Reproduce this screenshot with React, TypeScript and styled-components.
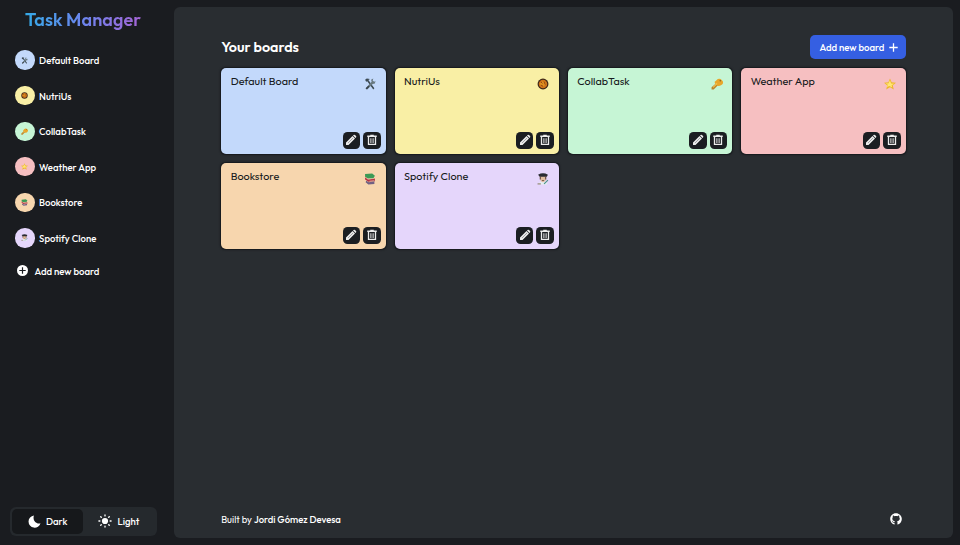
import React from "react";
import styled, { createGlobalStyle } from "styled-components";
import { FaGithub } from "react-icons/fa";

const GlobalStyle = createGlobalStyle`
  *, *::before, *::after { box-sizing: border-box; }
  body {
    margin: 0;
    background: #1a1c20;
    color: #fff;
    font-family: Outfit, Lato, sans-serif;
  }
  button { font: inherit; border: 0; padding: 0; color: inherit; background: none; cursor: pointer; }
  svg { display: block; flex: none; }
  ul { list-style: none; margin: 0; padding: 0; }
`;

const Shell = styled.div`
  display: flex;
  width: 960px;
  height: 545px;
  padding: 7px 7px 7px 0;
  overflow: hidden;
`;

const Sidebar = styled.aside`
  display: flex;
  flex-direction: column;
  width: 173.5px;
  height: 531px;
`;

const Label = styled.span`
  white-space: nowrap;
`;

const Brand = styled.h1`
  width: 116px;
  height: 26px;
  margin: 0 0 17.5px 25px;
  font-size: 18px;
  font-weight: 600;
  letter-spacing: 0.07px;
  line-height: 26px;
  white-space: nowrap;
  color: transparent;
  background: linear-gradient(90deg, #35a9e6, #6c85ee 50%, #a565d6);
  background-clip: text;
  -webkit-background-clip: text;
`;

const BoardList = styled.ul`
  display: flex;
  flex-direction: column;
  gap: 16.6px;
  padding-left: 15.2px;
`;

const BoardLink = styled.li`
  display: flex;
  align-items: center;
  gap: 4.5px;
  height: 19px;
  font-size: 9.6px;
  font-weight: 500;
`;

const Avatar = styled.span<{ $color: string }>`
  display: grid;
  place-items: center;
  width: 19.4px;
  height: 19.4px;
  border-radius: 50%;
  background: ${(p) => p.$color};
`;

const AddLink = styled.button`
  display: flex;
  align-items: center;
  gap: 6.5px;
  height: 16px;
  margin: 15.5px 0 0 17px;
  font-size: 9.6px;
  font-weight: 500;
`;

const ThemeSwitch = styled.div`
  display: flex;
  width: 146.5px;
  height: 29px;
  margin: auto 0 2px 10px;
  padding: 2px;
  border-radius: 6px;
  background: #25292d;
`;

const ThemeOption = styled.button<{ $active?: boolean }>`
  display: flex;
  flex: 1;
  align-items: center;
  justify-content: center;
  gap: 5px;
  padding-bottom: 1px;
  border-radius: 5px;
  font-size: 9.6px;
  font-weight: 500;
  background: ${(p) => (p.$active ? "#16181b" : "transparent")};
`;

const Panel = styled.main`
  display: flex;
  flex-direction: column;
  width: 779.5px;
  height: 531px;
  padding: 28px 47.5px 9px 47.7px;
  border-radius: 6px;
  background: #292d31;
`;

const Heading = styled.header`
  display: flex;
  align-items: center;
  justify-content: space-between;
  height: 24px;
  margin-bottom: 9px;
`;

const Title = styled.h2`
  margin: 0;
  font-size: 14.3px;
  font-weight: 600;
  line-height: 20px;
`;

const AddButton = styled.button`
  display: flex;
  align-items: center;
  justify-content: space-between;
  width: 96px;
  height: 24px;
  padding: 0 8px 0 10px;
  border-radius: 5px;
  background: #355fe2;
  font-size: 9.6px;
  font-weight: 500;
`;

const Grid = styled.section`
  display: grid;
  grid-template-columns: repeat(4, 1fr);
  grid-auto-rows: 86px;
  gap: 9px;
`;

const Card = styled.article<{ $color: string }>`
  display: flex;
  flex-direction: column;
  justify-content: space-between;
  padding: 5px 5px 5px 9.5px;
  border-radius: 5px;
  background: ${(p) => p.$color};
  box-shadow: 0 0 1.5px 0.5px #15181c;
  color: #171a20;
`;

const CardTop = styled.div`
  display: flex;
  justify-content: space-between;
  padding-right: 4.5px;
  font-size: 10.8px;
  line-height: 16px;
`;

const CardEmoji = styled.span`
  display: block;
  padding-top: 5px;
`;

const Actions = styled.div`
  display: flex;
  justify-content: flex-end;
  gap: 3px;
`;

const IconButton = styled.button`
  display: grid;
  place-items: center;
  width: 17.5px;
  height: 17.5px;
  border-radius: 4.5px;
  background: #1b1e22;
  color: #ececec;
`;

const Footer = styled.footer`
  display: flex;
  align-items: center;
  justify-content: space-between;
  height: 20px;
  margin-top: auto;
  padding-right: 4px;
  font-size: 9.5px;
`;

const Author = styled.b`
  font-weight: 500;
`;

type EmojiName = "tools" | "food" | "key" | "star" | "books" | "artist";

const emojiShapes: Record<EmojiName, React.ReactNode> = {
  tools: (
    <>
      <path d="M2 3 5 1l6 1-3 1.5L19 19l-2 2L6 6 4 7Z" fill="#3d4b54" />
      <path d="m3 19 11-12-1-4 4-2-1 4 3 2 2-2-1 5-4 1L6 21Z" fill="#687980" />
      <path d="m3 19 5-5 2 2-5 5Z" fill="#39434c" />
    </>
  ),
  food: (
    <>
      <circle cx="11" cy="11" r="10" fill="#3d2718" />
      <circle cx="11" cy="11" r="7.8" fill="#cf7418" />
      <path d="m5 10 5-4 6 3-3 6-6-1Z" fill="#e0921f" />
      <path d="m7 7 3 3m3-3 2 5m-8 1 4 2" stroke="#873913" strokeWidth="1.5" />
    </>
  ),
  key: (
    <>
      <path d="m10 9 4 3-9 9H1v-4Z" fill="#ba842a" />
      <path d="M10 4q5-5 10 0t-1 9-10-1-1-6Z" fill="#e8a62a" />
      <path d="m4 17 7-7" stroke="#f4c34e" strokeWidth="2" />
      <circle cx="17" cy="5" r="1.5" fill="#896226" />
    </>
  ),
  star: (
    <>
      <path d="m11 1 3 7 8 .6-6 5 2 7.4-7-4-7 4 2-7.4-6-5L8 8Z" fill="#edb72e" />
      <path d="m11 4 2 6 6 .5-5 3 1 4-5-3-5 2 2-4-4-3 5 .5Z" fill="#ffe775" />
    </>
  ),
  books: (
    <>
      <path d="m2 2 13-1 5 4-3 5H7L2 7Z" fill="#3c9a55" />
      <path d="m2 8 5 4 13-2v5L8 16l-6-4Z" fill="#b43043" />
      <path d="m4 14 5 3 10-2v5L8 21l-5-4Z" fill="#716183" />
      <path d="m8 11 10-1m-8 5 9-1" fill="none" stroke="#e2c9ab" strokeWidth="1.2" />
    </>
  ),
  artist: (
    <>
      <path d="M6 6h10v7l-3 4H9l-3-4Z" fill="#e0bd9e" />
      <path d="M2 3q9-5 18 0l-2 4H5Z" fill="#292b31" />
      <path d="M5 6h2v6H5m10-6h2v6h-2M9 13h4v1H9Z" fill="#5c4239" />
      <path d="M2 21q1-5 7-5l2 2 2-2q6 0 6 5Z" fill="#e5eef0" />
      <path d="m13 20 7-7" stroke="#4a9284" strokeWidth="2" />
      <path d="M1 20h6" stroke="#8c7a6c" strokeWidth="2" />
    </>
  ),
};

function Emoji({ name, size }: { name: EmojiName; size: number }) {
  return <svg width={size} height={size} viewBox="0 0 22 22">{emojiShapes[name]}</svg>;
}

function PencilIcon() {
  return (
    <svg width="12" height="12" viewBox="0 0 24 24">
      <path d="M2 22v-5L15 4l5 5L7 22ZM16 3l1-1q1.5-1.5 3 0l2 2q1.5 1.5 0 3l-1 1Z" fill="currentColor" />
      <path d="m6 18 10-10" stroke="#85888b" strokeWidth="1.4" />
    </svg>
  );
}

function TrashIcon() {
  return (
    <svg width="12" height="12" viewBox="0 0 24 24" fill="none" stroke="currentColor" strokeWidth="2.6">
      <path d="M2.5 4.5h19M8.5 3h7M5 5v15.7h14V5" />
      <path d="M9.8 8.5V18M14.2 8.5V18" strokeWidth="2" />
    </svg>
  );
}

function PlusIcon() {
  return (
    <svg width="9" height="9" viewBox="0 0 9 9" stroke="currentColor" strokeWidth="1.3">
      <path d="M4.5.3v8.4M.3 4.5h8.4" />
    </svg>
  );
}

function PlusCircleIcon() {
  return (
    <svg width="11" height="11" viewBox="0 0 11 11">
      <circle cx="5.5" cy="5.5" r="5.5" fill="#fff" />
      <path d="M5.5 2.3v6.4M2.3 5.5h6.4" stroke="#1a1c20" strokeWidth="1.2" />
    </svg>
  );
}

function MoonIcon() {
  return (
    <svg width="13" height="13" viewBox="0 0 13 13">
      <path d="M5.9.5A6.1 6.1 0 1 0 12.5 8.2C9 9.7 4.2 6.2 5.9.5Z" fill="#fff" />
    </svg>
  );
}

function SunIcon() {
  return (
    <svg width="14" height="14" viewBox="0 0 14 14" stroke="#fff" strokeWidth="1.3" strokeLinecap="round">
      <circle cx="7" cy="7" r="3.1" fill="#fff" stroke="none" />
      <path d="M7 .9v1M7 12.1v1M.9 7h1M12.1 7h1M2.7 2.7l.6.6M10.7 10.7l.6.6M2.7 11.3l.6-.6M10.7 3.3l.6-.6" />
    </svg>
  );
}

interface Board {
  name: string;
  color: string;
  emoji: EmojiName;
}

const boards: Board[] = [
  { name: "Default Board", color: "#c3d9fb", emoji: "tools" },
  { name: "NutriUs", color: "#f9efa5", emoji: "food" },
  { name: "CollabTask", color: "#c6f5d5", emoji: "key" },
  { name: "Weather App", color: "#f6bfc1", emoji: "star" },
  { name: "Bookstore", color: "#f7d6ae", emoji: "books" },
  { name: "Spotify Clone", color: "#e5d6fb", emoji: "artist" },
];

export default function App() {
  return (
    <>
      <GlobalStyle />
      <Shell>
        <Sidebar>
          <Brand>Task Manager</Brand>
          <BoardList>
            {boards.map((b) => (
              <BoardLink key={b.name}>
                <Avatar $color={b.color}><Emoji name={b.emoji} size={7} /></Avatar>
                <Label>{b.name}</Label>
              </BoardLink>
            ))}
          </BoardList>
          <AddLink><PlusCircleIcon /><Label>Add new board</Label></AddLink>
          <ThemeSwitch>
            <ThemeOption $active><MoonIcon /><Label>Dark</Label></ThemeOption>
            <ThemeOption><SunIcon /><Label>Light</Label></ThemeOption>
          </ThemeSwitch>
        </Sidebar>
        <Panel>
          <Heading>
            <Title>Your boards</Title>
            <AddButton><Label>Add new board</Label><PlusIcon /></AddButton>
          </Heading>
          <Grid>
            {boards.map((b) => (
              <Card key={b.name} $color={b.color}>
                <CardTop>
                  <Label>{b.name}</Label>
                  <CardEmoji><Emoji name={b.emoji} size={12} /></CardEmoji>
                </CardTop>
                <Actions>
                  <IconButton aria-label="Edit board"><PencilIcon /></IconButton>
                  <IconButton aria-label="Delete board"><TrashIcon /></IconButton>
                </Actions>
              </Card>
            ))}
          </Grid>
          <Footer>
            <Label>Built by <Author>Jordi Gómez Devesa</Author></Label>
            <FaGithub size={12} />
          </Footer>
        </Panel>
      </Shell>
    </>
  );
}
